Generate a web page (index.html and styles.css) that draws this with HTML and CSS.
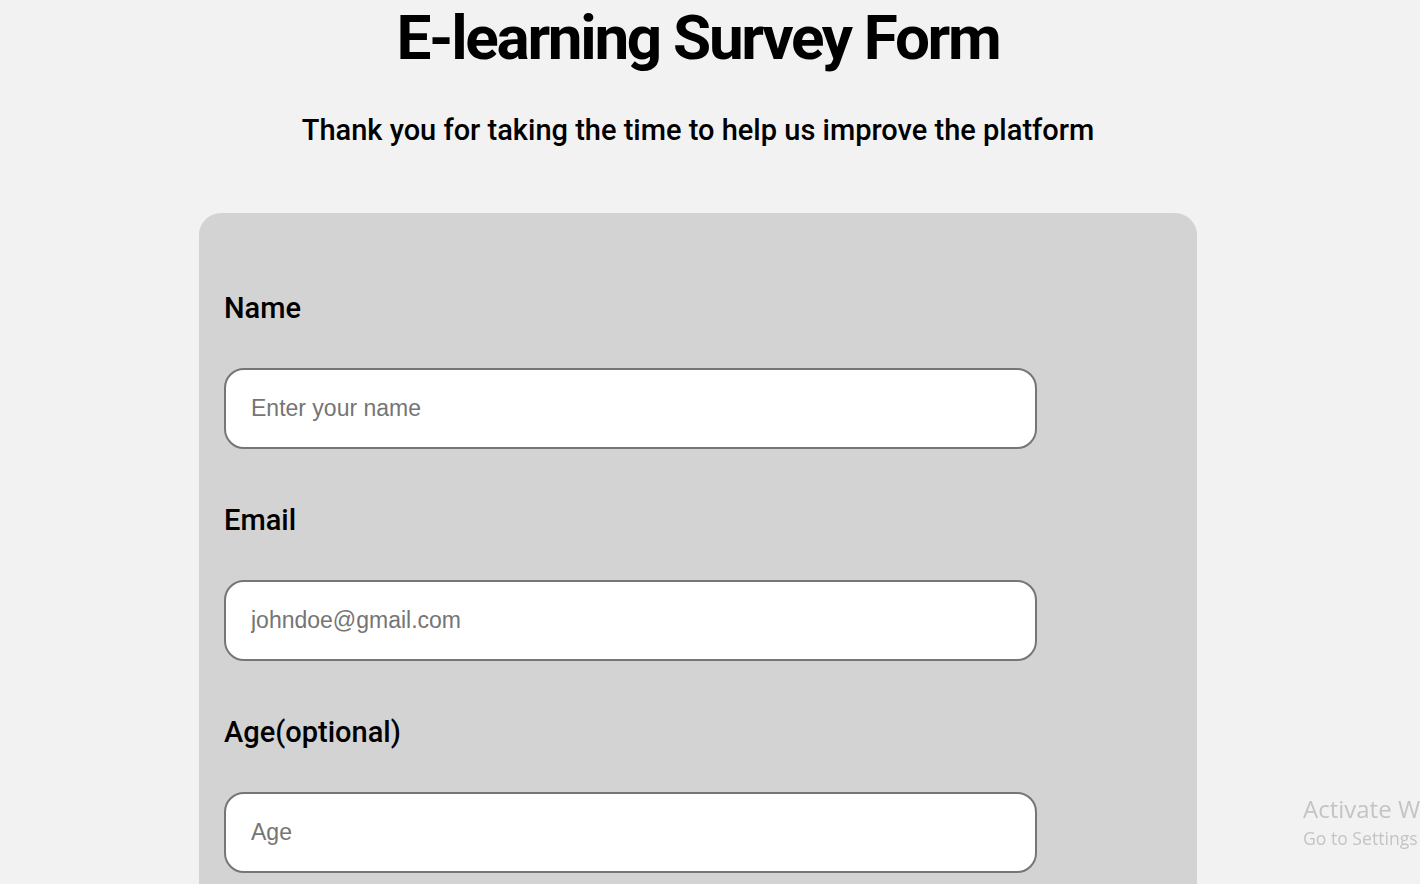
FILE: index.html
```html
<!DOCTYPE html>
<html lang="en">
<head>
<meta charset="utf-8">
<title>E-learning Survey Form</title>
<link rel="stylesheet" href="styles.css">
</head>
<body>
<main class="page">
  <h1 class="title">E-learning Survey Form</h1>
  <p class="subtitle">Thank you for taking the time to help us improve the platform</p>
  <form class="survey">
    <div class="field">
      <label class="label" for="name">Name</label>
      <input class="input" id="name" type="text" placeholder="Enter your name">
    </div>
    <div class="field">
      <label class="label" for="email">Email</label>
      <input class="input" id="email" type="email" placeholder="johndoe@gmail.com">
    </div>
    <div class="field">
      <label class="label" for="age">Age(optional)</label>
      <input class="input" id="age" type="number" placeholder="Age">
    </div>
  </form>
</main>
<div class="watermark">
  <div class="wm-title">Activate Windows</div>
  <div class="wm-sub">Go to Settings to activate Windows.</div>
</div>
</body>
</html>
```
FILE: styles.css
```css
html, body {
  margin: 0;
  padding: 0;
  background: #f2f2f2;
  overflow: hidden;
}
body {
  font-family: Roboto, "Liberation Sans", sans-serif;
  color: #000;
  height: 884px;
}
.page {
  width: 1396px;
  display: flex;
  flex-direction: column;
  align-items: center;
}
.title {
  margin: 0;
  padding-top: 2px;
  font-size: 62px;
  font-weight: 700;
  line-height: 72px;
  letter-spacing: -2.3px;
}
.subtitle {
  margin: 38px 0 0;
  font-size: 29px;
  font-weight: 500;
  line-height: 36px;
}
.survey {
  margin-top: 65px;
  width: 998px;
  box-sizing: border-box;
  background: #d3d3d3;
  border-radius: 22px;
  padding: 69px 25px 0 25px;
  display: flex;
  flex-direction: column;
  gap: 45px;
  min-height: 700px;
}
.field {
  display: flex;
  flex-direction: column;
  gap: 34px;
}
.label {
  font-size: 29px;
  font-weight: 500;
  line-height: 52px;
}
.input {
  width: 813px;
  height: 81px;
  box-sizing: border-box;
  border: 2px solid #767676;
  border-radius: 20px;
  background: #fff;
  padding: 0 25px;
  font-family: "Liberation Sans", Arial, sans-serif;
  font-size: 23px;
  color: #000;
  outline: none;
  -moz-appearance: textfield;
}
.input::placeholder {
  color: #757575;
}
.input::-webkit-outer-spin-button,
.input::-webkit-inner-spin-button {
  -webkit-appearance: none;
  margin: 0;
}
.watermark {
  position: fixed;
  left: 1303px;
  top: 792px;
  white-space: nowrap;
  font-family: "Open Sans", "Noto Sans", sans-serif;
  color: #c4c4c4;
}
.wm-title {
  font-size: 24px;
  line-height: 34px;
}
.wm-sub {
  font-size: 17.6px;
  line-height: 24px;
}
```
